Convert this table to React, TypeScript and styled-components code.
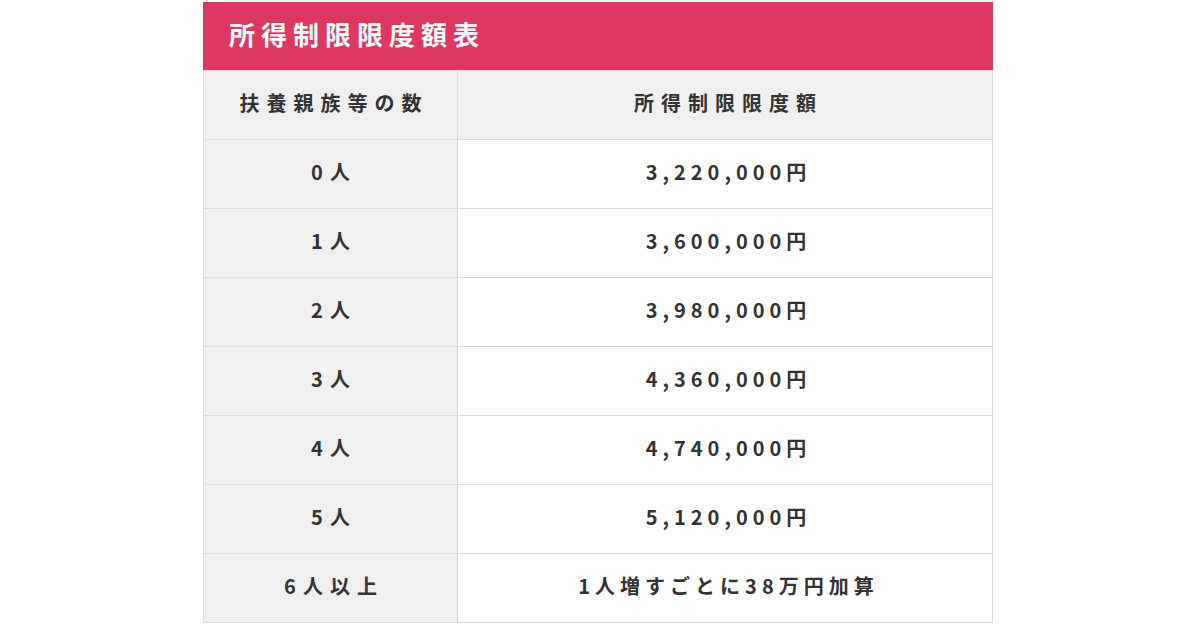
import styled, { createGlobalStyle } from "styled-components";

const GlobalStyle = createGlobalStyle`
  html, body {
    margin: 0;
    padding: 0;
    background: #ffffff;
  }
  body {
    font-family: "Noto Sans CJK JP", "Noto Sans", sans-serif;
    color: #333333;
  }
`;

interface Row {
  people: string;
  limit: string;
}

const rows: Row[] = [
  { people: "0人", limit: "3,220,000円" },
  { people: "1人", limit: "3,600,000円" },
  { people: "2人", limit: "3,980,000円" },
  { people: "3人", limit: "4,360,000円" },
  { people: "4人", limit: "4,740,000円" },
  { people: "5人", limit: "5,120,000円" },
  { people: "6人以上", limit: "1人増すごとに38万円加算" },
];

/**
 * Income limit table
 */
const App = () => {
  return (
    <>
      <GlobalStyle />
      <Page>
        <Wrapper>
          {/* Pink title bar */}
          <Title>所得制限限度額表</Title>

          <Table>
            <thead>
              <tr>
                <HeadCell $left>扶養親族等の数</HeadCell>
                <HeadCell>所得制限限度額</HeadCell>
              </tr>
            </thead>
            <tbody>
              {rows.map((row) => (
                <tr key={row.people}>
                  <SideCell>{row.people}</SideCell>
                  <ValueCell>{row.limit}</ValueCell>
                </tr>
              ))}
            </tbody>
          </Table>
        </Wrapper>
      </Page>
    </>
  );
};

const Page = styled.div`
  width: 1200px;
  height: 630px;
  padding-top: 2px;
  box-sizing: border-box;
  overflow: hidden;
`;

const Wrapper = styled.div`
  width: 790px;
  margin-left: 203px;
`;

const Title = styled.h2`
  margin: 0;
  height: 68px;
  display: flex;
  align-items: center;
  padding: 0 0 6px 26px;
  box-sizing: border-box;
  background: #dc3862;
  color: #ffffff;
  font-size: 26px;
  font-weight: 700;
  letter-spacing: 6px;
`;

const Table = styled.table`
  width: 100%;
  border-collapse: collapse;
  table-layout: fixed;
  font-size: 20px;
  font-weight: 700;
  letter-spacing: 7px;
  color: #333333;

  td,
  th {
    height: 69px;
    padding: 0 0 5px 7px;
    box-sizing: border-box;
    text-align: center;
    vertical-align: middle;
    border: 1px solid #dddddd;
  }
`;

const HeadCell = styled.th<{ $left?: boolean }>`
  width: ${({ $left }) => ($left ? "254px" : "auto")};
  background: #efefef;
  font-weight: 700;
`;

const SideCell = styled.td`
  background: #efefef;
`;

const ValueCell = styled.td`
  background: #ffffff;
  letter-spacing: 5px;
`;

export default App;
